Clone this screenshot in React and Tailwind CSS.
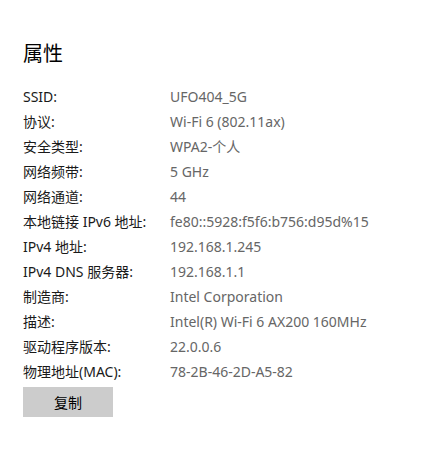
const rows = [
  ["SSID:", "UFO404_5G"],
  ["协议:", "Wi-Fi 6 (802.11ax)"],
  ["安全类型:", "WPA2-个人"],
  ["网络频带:", "5 GHz"],
  ["网络通道:", "44"],
  ["本地链接 IPv6 地址:", "fe80::5928:f5f6:b756:d95d%15"],
  ["IPv4 地址:", "192.168.1.245"],
  ["IPv4 DNS 服务器:", "192.168.1.1"],
  ["制造商:", "Intel Corporation"],
  ["描述:", "Intel(R) Wi-Fi 6 AX200 160MHz"],
  ["驱动程序版本:", "22.0.0.6"],
  ["物理地址(MAC):", "78-2B-46-2D-A5-82"],
];

export default function App() {
  return (
    <div
      className="w-[427px] h-[453px] bg-white px-[23px] pt-[40px]"
      style={{ fontFamily: '"Noto Sans", "Noto Sans CJK SC", sans-serif' }}
    >
      <h1 className="text-[20px] leading-[28px] text-black">属性</h1>
      <div className="mt-[16px]">
        {rows.map(([label, value]) => (
          <div key={label} className="flex h-[25px] items-center text-[14px]">
            <div className="w-[147px] text-[#1a1a1a]">{label}</div>
            <div className="text-[#666666]">{value}</div>
          </div>
        ))}
      </div>
      <button className="mt-[3px] w-[90px] h-[30px] bg-[#cccccc] text-[14px] text-black">
        复制
      </button>
    </div>
  );
}
